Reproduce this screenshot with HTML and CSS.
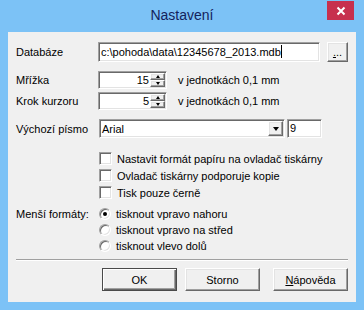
FILE: index.html
```html
<!DOCTYPE html>
<html lang="cs">
<head>
  <meta charset="UTF-8">
  <meta name="viewport" content="width=device-width, initial-scale=1.0">
  <title>Nastavení</title>
  <link rel="stylesheet" href="styles.css">
</head>
<body>

  <div class="window">
    <div class="titlebar">
      <span class="title">Nastavení</span>
      <span class="close">
        <svg width="10" height="10" viewBox="0 0 10 10">
          <path d="M1.5 1.5 L8.5 8.5 M8.5 1.5 L1.5 8.5" stroke="#fff" stroke-width="2" fill="none"/>
        </svg>
      </span>
    </div>

    <div class="client">
      <div class="row row-db">
        <span class="lbl">Databáze</span>
        <div class="field db-field">c:\pohoda\data\12345678_2013.mdb<span class="caret"></span></div>
        <button class="btn btn-browse"><u>.</u>..</button>
      </div>

      <div class="row row-spin">
        <span class="lbl">Mřížka</span>
        <div class="field spin">
          <span class="spin-val">15</span>
          <div class="spin-btns">
            <span class="btn spin-btn"><i class="tri-up"></i></span>
            <span class="btn spin-btn"><i class="tri-down"></i></span>
          </div>
        </div>
        <span class="unit">v jednotkách 0,1 mm</span>
      </div>

      <div class="row row-spin row-spin2">
        <span class="lbl">Krok kurzoru</span>
        <div class="field spin">
          <span class="spin-val">5</span>
          <div class="spin-btns">
            <span class="btn spin-btn"><i class="tri-up"></i></span>
            <span class="btn spin-btn"><i class="tri-down"></i></span>
          </div>
        </div>
        <span class="unit">v jednotkách 0,1 mm</span>
      </div>

      <div class="row row-font">
        <span class="lbl">Výchozí písmo</span>
        <div class="field combo">
          <span class="combo-val">Arial</span>
          <span class="btn combo-btn"><i class="tri-drop"></i></span>
        </div>
        <div class="field size-field">9</div>
      </div>

      <div class="checks">
        <div class="check-row"><span class="checkbox"></span>Nastavit formát papíru na ovladač tiskárny</div>
        <div class="check-row"><span class="checkbox"></span>Ovladač tiskárny podporuje kopie</div>
        <div class="check-row"><span class="checkbox"></span>Tisk pouze černě</div>
      </div>

      <div class="radios">
        <span class="lbl">Menší formáty:</span>
        <div class="radio-list">
          <div class="radio-row"><span class="radio checked"></span>tisknout vpravo nahoru</div>
          <div class="radio-row"><span class="radio"></span>tisknout vpravo na střed</div>
          <div class="radio-row"><span class="radio"></span>tisknout vlevo dolů</div>
        </div>
      </div>

      <div class="separator"></div>

      <div class="buttons">
        <button class="btn btn-push btn-default">OK</button>
        <button class="btn btn-push">Storno</button>
        <button class="btn btn-push btn-help"><u>N</u>ápověda</button>
      </div>
    </div>
  </div>

</body>
</html>
```

FILE: styles.css
```css
body {
  margin: 0;
  font-family: "Liberation Sans", Arial, sans-serif;
  font-size: 11px;
  color: #000;
}

.window {
  width: 364px;
  height: 310px;
  background-color: #7cc2f6;
  display: flex;
  flex-direction: column;
}

.titlebar {
  height: 32px;
  display: grid;
  grid-template-columns: 1fr;
  position: relative;
}

.title {
  font-size: 14px;
  color: #14225c;
  text-align: center;
  line-height: 30px;
}

/* window control overlaying the title bar */
.close {
  position: absolute;
  top: 1px;
  right: 10px;
  width: 27px;
  height: 19px;
  background-color: #c7304e;
  display: flex;
  align-items: center;
  justify-content: center;
}

.client {
  margin: 0 8px;
  height: 270px;
  background-color: #f0f0f0;
  padding: 10px 8px 0 8px;
  box-sizing: border-box;
  display: flex;
  flex-direction: column;
}

.row {
  display: flex;
  align-items: center;
}

.lbl {
  width: 82px;
  flex-shrink: 0;
}

/* sunken edit look */
.field {
  box-sizing: border-box;
  background-color: #fff;
  border: 1px solid;
  border-color: #a0a0a0 #fff #fff #a0a0a0;
  box-shadow: inset 1px 1px #696969, inset -1px -1px #e3e3e3;
}

/* raised button look */
.btn {
  box-sizing: border-box;
  background-color: #f0f0f0;
  border: 1px solid;
  border-color: #fff #696969 #696969 #fff;
  box-shadow: inset -1px -1px #a0a0a0, inset 1px 1px #e3e3e3;
  font-family: inherit;
  font-size: 11px;
  color: #000;
  padding: 0;
}

.row-db {
  height: 20px;
}

.db-field {
  width: 223px;
  height: 20px;
  padding: 0 2px;
  line-height: 18px;
  white-space: nowrap;
}

.caret {
  display: inline-block;
  width: 1px;
  height: 13px;
  background-color: #000;
  vertical-align: -2px;
}

.btn-browse {
  width: 21px;
  height: 20px;
  margin-left: 7px;
  line-height: 14px;
}

.row-spin {
  height: 18px;
  margin-top: 9px;
}

.row-spin2 {
  margin-top: 3px;
}

.spin {
  width: 69px;
  height: 18px;
  display: flex;
  padding: 1px 1px 1px 1px;
}

.spin-val {
  flex: 1;
  text-align: right;
  line-height: 15px;
  padding-right: 1px;
}

.spin-btns {
  width: 15px;
  display: flex;
  flex-direction: column;
}

.spin-btn {
  flex: 1;
  display: flex;
  align-items: center;
  justify-content: center;
}

.tri-up, .tri-down, .tri-drop {
  width: 0;
  height: 0;
  border-left: 2.5px solid transparent;
  border-right: 2.5px solid transparent;
}

.tri-up {
  border-bottom: 3px solid #000;
}

.tri-down {
  border-top: 3px solid #000;
}

.tri-drop {
  border-left-width: 3.5px;
  border-right-width: 3.5px;
  border-top: 4px solid #000;
}

.unit {
  margin-left: 11px;
}

.row-font {
  height: 19px;
  margin-top: 9px;
}

.combo {
  width: 186px;
  height: 19px;
  margin-left: 1px;
  display: flex;
  padding: 1px;
}

.combo-val {
  flex: 1;
  padding-left: 1px;
  line-height: 16px;
}

.combo-btn {
  width: 15px;
  display: flex;
  align-items: center;
  justify-content: center;
}

.size-field {
  width: 35px;
  height: 19px;
  margin-left: 2px;
  padding-left: 2px;
  line-height: 17px;
}

.checks {
  margin-top: 12px;
  padding-left: 83px;
}

.check-row {
  height: 17px;
  display: flex;
  align-items: center;
}

.checkbox {
  width: 13px;
  height: 13px;
  box-sizing: border-box;
  margin-right: 5px;
  background-color: #fff;
  border: 1px solid;
  border-color: #a0a0a0 #fff #fff #a0a0a0;
  box-shadow: inset 1px 1px #696969, inset -1px -1px #e3e3e3;
}

.radios {
  margin-top: 5px;
  display: flex;
}

.lbl + .radio-list {
  margin-left: 1px;
}

.radios .lbl {
  line-height: 16px;
}

.radio-row {
  height: 16px;
  display: flex;
  align-items: center;
}

.radio {
  width: 12px;
  height: 12px;
  box-sizing: border-box;
  margin-right: 5px;
  border-radius: 50%;
  background-color: #fff;
  border: 1px solid;
  border-color: #a0a0a0 #fff #fff #a0a0a0;
  box-shadow: inset 1px 1px #696969, inset -1px -1px #e3e3e3;
  display: flex;
  align-items: center;
  justify-content: center;
}

.radio.checked::after {
  content: "";
  width: 4px;
  height: 4px;
  border-radius: 50%;
  background-color: #000;
}

.separator {
  margin-top: 5px;
  height: 1px;
  background-color: #a0a0a0;
  border-bottom: 1px solid #fff;
}

.buttons {
  margin-top: 7px;
  display: flex;
  justify-content: flex-end;
}

.btn-push {
  width: 75px;
  height: 23px;
  margin-left: 8px;
}

.btn-help {
  margin-left: 13px;
}

.btn-default {
  border: 1px solid #4a4a4a;
  box-shadow: inset 1px 1px #fff, inset -1px -1px #696969, inset -2px -2px #a0a0a0;
}
```
